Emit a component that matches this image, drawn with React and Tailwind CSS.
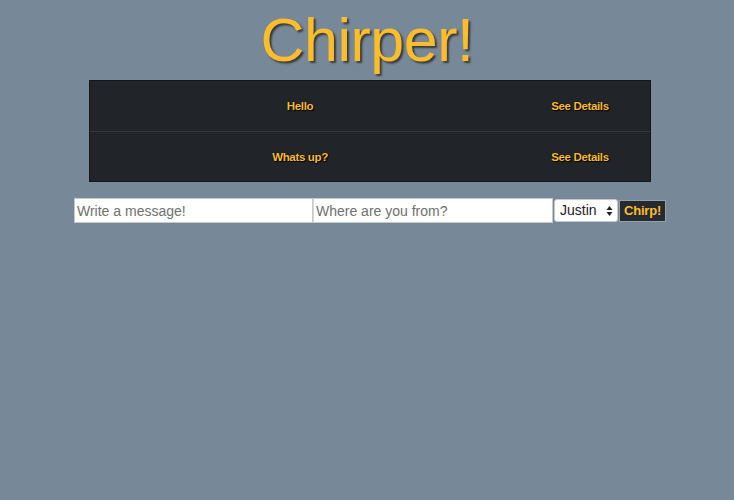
import React from "react";

export default function App() {
  const rows = ["Hello", "Whats up?"];
  return (
    <div className="min-h-[500px] bg-[#778899] font-['Liberation_Sans',Arial,sans-serif] overflow-hidden">
      <h1 className="h-[80px] pt-[4px] text-center text-[61px] leading-[72px] text-[#fbbd2b] [text-shadow:2px_2px_2px_#3a3a3a] tracking-[-0.5px]">
        Chirper!
      </h1>
      <div className="ml-[89px] w-[562px] border border-[#15181b] bg-[#212529]">
        {rows.map((r, i) => (
          <div
            key={i}
            className={
              "flex items-center pt-[2px] text-[11.5px] font-bold tracking-[-0.35px] text-[#fbbd2b] [text-shadow:0_0_1px_#000,1px_1px_1px_#000] " +
              (i > 0 ? "border-t border-[#32383e] h-[50px]" : "h-[50px]")
            }
          >
            <div className="w-[420px] text-center">{r}</div>
            <div className="w-[140px] text-center">See Details</div>
          </div>
        ))}
      </div>
      <div className="ml-[74px] mt-[16px] flex items-center">
        <input
          className="h-[25px] w-[239px] border border-[#c8c8c8] bg-white px-[2px] text-[14px] text-[#333] placeholder:text-[#707070] outline-none"
          placeholder="Write a message!"
        />
        <input
          className="h-[25px] w-[240px] border border-[#c8c8c8] border-l-[#d8d8d8] bg-white px-[2px] text-[14px] text-[#333] placeholder:text-[#707070] outline-none"
          placeholder="Where are you from?"
        />
        <div className="ml-[1px] flex h-[23px] w-[64px] items-center justify-between rounded-[3px] border border-[#c8c8c8] bg-white pl-[5px] pr-[4px] text-[14px] text-[#222]">
          <span>Justin</span>
          <svg width="7" height="12" viewBox="0 0 7 12">
            <path d="M3.5 1 L6.5 5 L0.5 5 Z" fill="#222" />
            <path d="M3.5 11 L6.5 7 L0.5 7 Z" fill="#222" />
          </svg>
        </div>
        <button className="ml-[1px] h-[22px] w-[47px] border border-[#9aa0a6] bg-[#252a30] text-[13px] font-bold leading-[18px] tracking-[-0.2px] text-[#fbbd2b]">
          Chirp!
        </button>
      </div>
    </div>
  );
}
